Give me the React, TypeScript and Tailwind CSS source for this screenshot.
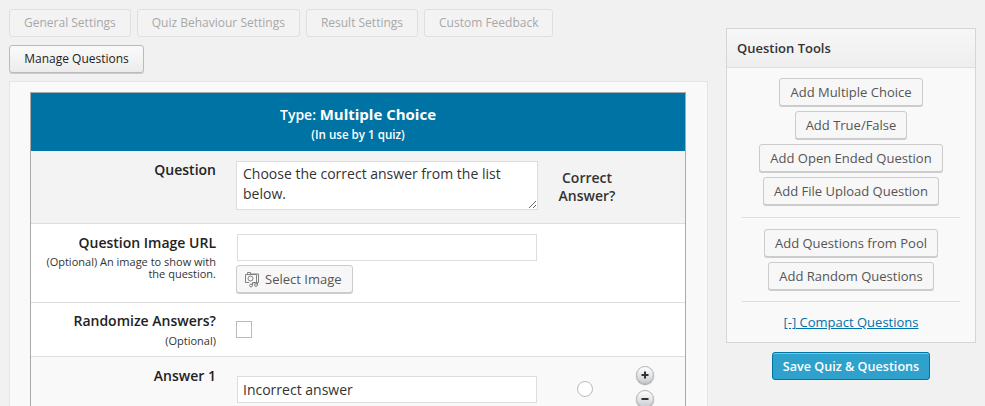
const font = "font-['Open_Sans',sans-serif]";

const TabButton = ({ label }: { label: string }) => (
  <button className="h-[28px] px-[14px] rounded-[3px] border border-[#dfdfdf] bg-[#f3f3f3] text-[12px] leading-[26px] text-[#a8a8a8]">
    {label}
  </button>
);

const ToolButton = ({ label, width }: { label: string; width: string }) => (
  <button className={`${width} h-[28px] rounded-[3px] border border-[#cccccc] bg-[#f7f7f7] text-[13px] leading-[26px] text-[#555555] shadow-[0_1px_0_#cccccc]`}>
    {label}
  </button>
);

const MediaIcon = () => (
  <svg width="16" height="17" viewBox="0 0 16 17" fill="none" stroke="#808080" strokeWidth="1">
    <path d="M3.5 3V1.5h3V3h8v8.5h-2" />
    <path d="M1.5 3.5h11v8h-4M1.5 3.5v8h3.5" />
    <circle cx="6.5" cy="7.5" r="2.5" />
    <circle cx="7" cy="14.5" r="1.4" />
    <circle cx="12" cy="14" r="1.4" />
    <path d="M8.5 14.5V12l5-.5V14" />
  </svg>
);

const RoundIcon = ({ sign }: { sign: string }) => (
  <div className="w-[18px] h-[18px] rounded-full border border-[#b5b5b5] bg-[linear-gradient(#ffffff,#c9ccd2)] shadow-[0_1px_1px_#999999] flex items-center justify-center">
    <svg width="8" height="8" viewBox="0 0 8 8" fill="#333333">
      <rect x="0.5" y="3" width="7" height="2" />
      {sign === "+" && <rect x="3" y="0.5" width="2" height="7" />}
    </svg>
  </div>
);

export default function App() {
  return (
    <div className={`${font} w-[985px] h-[406px] overflow-hidden bg-[#f1f1f1] flex`}>
      <div className="w-[726px] shrink-0 pl-[9px] pt-[9px]">
        <div className="flex gap-[6px]">
          <TabButton label="General Settings" />
          <TabButton label="Quiz Behaviour Settings" />
          <TabButton label="Result Settings" />
          <TabButton label="Custom Feedback" />
        </div>
        <button className="mt-[8px] block h-[28px] w-[135px] rounded-[3px] border border-[#bbbbbb] bg-[linear-gradient(#fafafa,#ececec)] text-[12px] leading-[26px] text-[#222222] shadow-[0_1px_0_#cccccc]">
          Manage Questions
        </button>
        <div className="mt-[8px] w-[699px] h-[400px] border border-[#e5e5e5] bg-[#f9f9f9] pl-[20px] pt-[10px]">
          <div className="w-[656px] border-x border-[#aaaaaa] border-t border-t-[#aaaaaa]">
            <div className="h-[58px] bg-[#0073a5] text-white text-center pt-[9px]">
              <div className="text-[14px] leading-[24px] font-semibold">
                Type: <span className="text-[15px] font-bold">Multiple Choice</span>
              </div>
              <div className="text-[11.6px] leading-[16px] font-semibold">(In use by 1 quiz)</div>
            </div>

            <div className="flex h-[73px] bg-[#f3f3f3] border-b border-[#dddddd]">
              <div className="w-[185px] shrink-0 pt-[9px] text-right text-[14px] leading-[20px] font-semibold text-[#222222]">Question</div>
              <textarea
                readOnly
                className="ml-[20px] mt-[10px] w-[302px] h-[49px] border border-[#dddddd] bg-white px-[6px] py-[2px] text-[14px] leading-[20px] text-[#333333] outline-none"
                value="Choose the correct answer from the list below."
              />
              <div className="ml-[9px] w-[80px] pt-[18px] text-center text-[14px] leading-[18px] font-semibold text-[#333333]">
                Correct Answer?
              </div>
            </div>

            <div className="flex h-[79px] bg-white border-b border-[#dddddd]">
              <div className="w-[185px] shrink-0 pt-[9px] text-right">
                <div className="text-[14px] leading-[20px] font-semibold text-[#222222]">Question Image URL</div>
                <div className="mt-[3px] text-[11px] leading-[12px] text-[#333333]">
                  (Optional) An image to show with
                  <br />
                  the question.
                </div>
              </div>
              <div className="ml-[20px] pt-[10px]">
                <div className="ml-px w-[300px] h-[27px] border border-[#dddddd] bg-white" />
                <button className="mt-[4px] flex items-center gap-[5px] w-[117px] h-[28px] pl-[7px] rounded-[3px] border border-[#cccccc] bg-[#f7f7f7] text-[13px] text-[#555555] shadow-[0_1px_0_#cccccc]">
                  <MediaIcon />
                  <span className="pt-px">Select Image</span>
                </button>
              </div>
            </div>

            <div className="flex h-[54px] bg-white border-b border-[#dddddd]">
              <div className="w-[185px] shrink-0 pt-[8px] text-right">
                <div className="text-[14px] leading-[20px] font-semibold text-[#222222]">Randomize Answers?</div>
                <div className="mt-[3px] text-[11px] leading-[14px] text-[#333333]">(Optional)</div>
              </div>
              <div className="ml-[20px] mt-[18px] w-[16px] h-[17px] border border-[#bbbbbb] bg-white" />
            </div>

            <div className="flex h-[60px] bg-[#f9f9f9]">
              <div className="w-[185px] shrink-0 pt-[9px] text-right text-[14px] leading-[20px] font-semibold text-[#222222]">Answer 1</div>
              <div className="ml-[21px] mt-[19px] w-[300px] h-[27px] border border-[#dddddd] bg-white px-[5px] text-[14px] leading-[25px] text-[#333333]">
                Incorrect answer
              </div>
              <div className="ml-[40px] mt-[24px] w-[16px] h-[16px] rounded-full border border-[#bbbbbb] bg-white" />
              <div className="ml-[43px] mt-[9px] flex flex-col gap-[6px]">
                <RoundIcon sign="+" />
                <RoundIcon sign="-" />
              </div>
            </div>
          </div>
        </div>
      </div>

      <div className="w-[250px] pt-[28px]">
        <div className="h-[315px] border border-[#d5d5d5] bg-[#f9f9f9]">
          <div className="h-[39px] border-b border-[#dddddd] bg-[linear-gradient(#f7f7f7,#eeeeee)] pl-[10px] text-[13px] leading-[39px] font-semibold text-[#333333]">
            Question Tools
          </div>
          <div className="flex flex-col items-center pt-[10px]">
            <div className="flex flex-col items-center gap-[5px]">
              <ToolButton label="Add Multiple Choice" width="w-[144px]" />
              <ToolButton label="Add True/False" width="w-[112px]" />
              <ToolButton label="Add Open Ended Question" width="w-[184px]" />
              <ToolButton label="Add File Upload Question" width="w-[176px]" />
            </div>
            <div className="mt-[12px] mb-[11px] w-[218px] h-px bg-[#dddddd]" />
            <div className="flex flex-col items-center gap-[5px]">
              <ToolButton label="Add Questions from Pool" width="w-[174px]" />
              <ToolButton label="Add Random Questions" width="w-[166px]" />
            </div>
            <div className="mt-[11px] w-[218px] h-px bg-[#dddddd]" />
            <a className="mt-[11px] text-[13px] leading-[18px] text-[#0073aa] underline">[-] Compact Questions</a>
          </div>
        </div>
        <div className="mt-[9px] flex justify-center">
          <button className="w-[158px] h-[28px] pt-px rounded-[3px] border border-[#0074a2] bg-[#2ea2cc] text-[12.6px] leading-[26px] font-semibold text-white shadow-[inset_0_1px_0_#78c8e6]">
            Save Quiz &amp; Questions
          </button>
        </div>
      </div>
    </div>
  );
}
